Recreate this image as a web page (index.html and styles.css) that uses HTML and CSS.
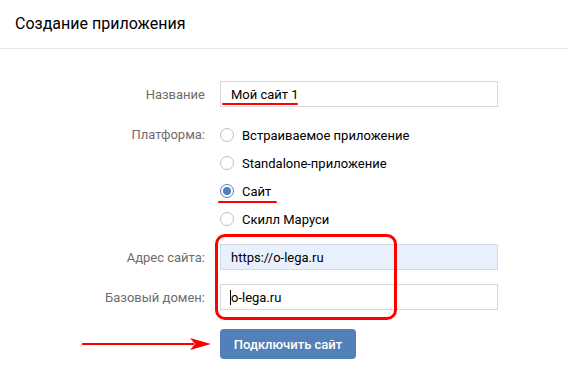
FILE: index.html
```html
<!DOCTYPE html>
<html lang="ru">
<head>
    <meta charset="UTF-8">
    <meta name="viewport" content="width=device-width, initial-scale=1.0">
    <title>Создание приложения</title>
    <link rel="stylesheet" href="styles.css">
</head>
<body>
    <div class="header">Создание приложения</div>

    <form class="form">
        <div class="row">
            <label class="label">Название</label>
            <div class="field">
                <input class="input" type="text" value="Мой сайт 1">
                <span class="mark mark-name"></span>
            </div>
        </div>

        <div class="row row-top">
            <div class="label label-radio">Платформа:</div>
            <div class="radios">
                <div class="radio"><span class="circle"></span>Встраиваемое приложение</div>
                <div class="radio"><span class="circle"></span>Standalone-приложение</div>
                <div class="radio checked"><span class="circle"></span>Сайт<span class="mark mark-site"></span></div>
                <div class="radio"><span class="circle"></span>Скилл Маруси</div>
            </div>
        </div>

        <div class="site-group">
            <div class="row row-address">
                <label class="label">Адрес сайта:</label>
                <div class="field">
                    <input class="input input-filled" type="text" value="https://o-lega.ru">
                </div>
            </div>
            <div class="row row-domain">
                <label class="label">Базовый домен:</label>
                <div class="field">
                    <input class="input" type="text" value="o-lega.ru">
                    <span class="caret"></span>
                </div>
            </div>
            <!-- red frame drawn over both fields -->
            <div class="frame"></div>
        </div>

        <div class="row row-button">
            <svg class="arrow" width="130" height="14" viewBox="0 0 130 14">
                <line x1="0" y1="7" x2="112" y2="7" stroke="#f00" stroke-width="2"/>
                <path d="M108 1 L129 7 L108 13 L113 7 Z" fill="#f00"/>
            </svg>
            <div class="label"></div>
            <button class="button" type="button">Подключить сайт</button>
        </div>
    </form>
</body>
</html>
```

FILE: styles.css
```css
* {
    margin: 0;
    padding: 0;
    box-sizing: border-box;
}

html, body {
    height: 100%;
    background: #fff;
    font-family: Roboto, "Liberation Sans", Arial, sans-serif;
    font-size: 13px;
    color: #000;
}

.header {
    height: 49px;
    line-height: 47px;
    padding-left: 15px;
    font-size: 16px;
    color: #000;
    border-bottom: 1px solid #e7e8ec;
}

.form {
    padding-top: 32px;
}

.row {
    display: flex;
    align-items: center;
    position: relative;
}

.row-top {
    align-items: flex-start;
    margin-top: 14px;
}

.label {
    width: 205px;
    flex-shrink: 0;
    text-align: right;
    color: #6d6d6d;
}

.label-radio {
    line-height: 28px;
}

.field {
    position: relative;
    margin-left: 15px;
    width: 278px;
}

.input {
    display: block;
    width: 100%;
    height: 26px;
    padding: 0 10px;
    border: 1px solid #d3d9de;
    background: #fff;
    font-family: inherit;
    font-size: 13px;
    color: #000;
    outline: none;
}

.input-filled {
    background: #e8f0fe;
}

.radios {
    margin-left: 15px;
}

.radio {
    position: relative;
    display: flex;
    align-items: center;
    height: 28px;
    color: #000;
}

.circle {
    width: 14px;
    height: 14px;
    margin-right: 8px;
    border: 1px solid #b8c1cc;
    border-radius: 50%;
    display: flex;
    align-items: center;
    justify-content: center;
}

.checked .circle {
    border-color: #5181b8;
}

.checked .circle::after {
    content: "";
    width: 8px;
    height: 8px;
    border-radius: 50%;
    background: #5181b8;
}

/* red hand-drawn underlines */
.mark {
    position: absolute;
    height: 2px;
    background: #f00;
    border-radius: 1px;
}

.mark-name {
    left: 2px;
    top: 22px;
    width: 76px;
}

.mark-site {
    left: -2px;
    top: 24px;
    width: 59px;
}

.caret {
    position: absolute;
    left: 10px;
    top: 6px;
    width: 1px;
    height: 15px;
    background: #000;
}

.site-group {
    position: relative;
    margin-top: 11px;
}

.row-domain {
    margin-top: 14px;
}

.frame {
    position: absolute;
    left: 215px;
    top: -10px;
    width: 182px;
    height: 86px;
    border: 3px solid #f00;
    border-radius: 10px;
}

.row-button {
    margin-top: 19px;
}

.button {
    margin-left: 15px;
    width: 136px;
    height: 30px;
    border: none;
    border-radius: 4px;
    background: #5181b8;
    color: #fff;
    font-family: inherit;
    font-size: 13px;
    font-weight: 500;
    cursor: pointer;
}

.arrow {
    position: absolute;
    left: 82px;
    top: 8px;
}
```
